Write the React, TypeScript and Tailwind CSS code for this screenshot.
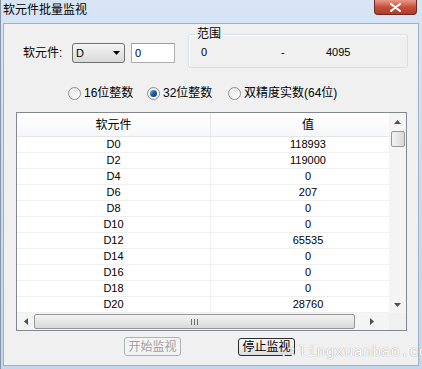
import React from "react";

const rows: [string, string][] = [
  ["D0", "118993"],
  ["D2", "119000"],
  ["D4", "0"],
  ["D6", "207"],
  ["D8", "0"],
  ["D10", "0"],
  ["D12", "65535"],
  ["D14", "0"],
  ["D16", "0"],
  ["D18", "0"],
  ["D20", "28760"],
];

const font = { fontFamily: '"Liberation Sans", "Noto Sans CJK SC", sans-serif' };

function Radio({ checked, label, width }: { checked?: boolean; label: string; width: string }) {
  return (
    <div className={`flex items-center ${width}`}>
      <span className="flex h-[13px] w-[13px] items-center justify-center rounded-full border border-[#8e8f8f] bg-gradient-to-br from-[#e6e6e6] to-[#ffffff]">
        {checked && (
          <span className="h-[7px] w-[7px] rounded-full bg-gradient-to-br from-[#79b8e6] via-[#1e5f99] to-[#0b3a66]" />
        )}
      </span>
      <span className="ml-[3px] text-[12px] leading-[14px] text-black">{label}</span>
    </div>
  );
}

function Arrow({ dir }: { dir: "up" | "down" | "left" | "right" }) {
  const pts = {
    up: "0,4 3.5,0 7,4",
    down: "0,0 7,0 3.5,4",
    left: "4,0 4,7 0,3.5",
    right: "0,0 0,7 4,3.5",
  }[dir];
  const vert = dir === "up" || dir === "down";
  return (
    <svg width={vert ? 7 : 4} height={vert ? 4 : 7} viewBox={vert ? "0 0 7 4" : "0 0 4 7"}>
      <polygon points={pts} fill="#505050" />
    </svg>
  );
}

export default function App() {
  return (
    <div
      className="relative h-[369px] w-[422px] overflow-hidden border-l border-[#8595a8] bg-gradient-to-b from-[#d7e5f5] via-[#c9dcf1] to-[#c2d6ec]"
      style={font}
    >
      {/* title bar */}
      <div className="flex h-[23px] items-start justify-between">
        <span className="ml-[2px] mt-[3px] text-[12px] leading-[14px] text-black">软元件批量监视</span>
        <div className="mr-[5px] flex h-[15px] w-[43px] items-center justify-center rounded-b-[4px] border border-t-0 border-[#6e2a22] bg-gradient-to-b from-[#e79a8a] via-[#c8503a] to-[#b33a24]">
          <svg width="11" height="9" viewBox="0 0 11 9">
            <path d="M1 1 L10 8 M10 1 L1 8" stroke="#ffffff" strokeWidth="2.2" strokeLinecap="round" />
          </svg>
        </div>
      </div>

      {/* client area */}
      <div className="ml-[2px] h-[343px] w-[416px] border border-[#9fb1c6] bg-[#f0f0f0]">
        {/* row 1 */}
        <div className="flex h-[45px] items-start">
          <div className="mt-[19px] flex h-[20px] items-center">
            <span className="ml-[19px] w-[49px] text-[12px] leading-[14px] text-black">软元件:</span>
            <div className="flex h-[20px] w-[53px] items-center justify-between rounded-[3px] border border-[#707070] bg-gradient-to-b from-[#f4f4f4] to-[#dadada] pl-[3px] pr-[4px]">
              <span className="text-[11px] leading-[12px] text-black">D</span>
              <svg width="7" height="4" viewBox="0 0 7 4">
                <polygon points="0,0 7,0 3.5,4" fill="#000000" />
              </svg>
            </div>
            <div className="ml-[6px] flex h-[20px] w-[44px] items-center border border-[#abadb3] border-t-[#9a9da5] bg-white pl-[3px]">
              <span className="text-[11px] leading-[12px] text-black">0</span>
            </div>
          </div>
          <fieldset className="ml-[13px] mt-[3px] w-[220px] rounded-[3px] border border-[#d5dfe5] px-0 pb-[5px] pt-[1px] shadow-[inset_1px_1px_0_#ffffff]">
            <legend className="ml-[6px] px-[2px] text-[12px] leading-[14px] text-black">范围</legend>
            <div className="flex h-[20px] items-center text-[11px] text-black">
              <span className="ml-[12px] w-[80px]">0</span>
              <span className="w-[45px]">-</span>
              <span>4095</span>
            </div>
          </fieldset>
        </div>

        {/* radios */}
        <div className="ml-[64px] mt-[15px] flex h-[18px] items-center">
          <Radio label="16位整数" width="w-[79px]" />
          <Radio checked label="32位整数" width="w-[81px]" />
          <Radio label="双精度实数(64位)" width="w-[120px]" />
        </div>

        {/* list view */}
        <div className="ml-[12px] mt-[10px] flex h-[219px] w-[391px] flex-col border border-[#828790] bg-white">
          <div className="flex h-[200px]">
            <div className="w-[372px] overflow-hidden">
              <div className="flex h-[24px] w-[388px] border-b border-[#e5e5e5] bg-gradient-to-b from-[#ffffff] to-[#f6f7f9]">
                <div className="flex w-[194px] items-center justify-center border-r border-[#e5e5e5] text-[12px] text-black">软元件</div>
                <div className="flex w-[194px] items-center justify-center text-[12px] text-black">值</div>
              </div>
              {rows.map(([name, value]) => (
                <div key={name} className="flex h-[16px] w-[388px] border-b border-[#f0f0f0] text-[11px] leading-[15px] text-black">
                  <div className="w-[194px] border-r border-[#f0f0f0] text-center">{name}</div>
                  <div className="w-[194px] text-center">{value}</div>
                </div>
              ))}
            </div>
            <div className="flex w-[17px] flex-col items-center bg-[#f4f4f4]">
              <div className="flex h-[18px] items-center justify-center">
                <Arrow dir="up" />
              </div>
              <div className="h-[16px] w-[14px] rounded-[2px] border border-[#979797] bg-gradient-to-r from-[#f3f3f3] to-[#d9d9d9]" />
              <div className="flex-1" />
              <div className="flex h-[17px] items-center justify-center">
                <Arrow dir="down" />
              </div>
            </div>
          </div>
          <div className="flex h-[17px]">
            <div className="flex w-[372px] items-center bg-[#f4f4f4]">
              <div className="flex w-[17px] justify-center">
                <Arrow dir="left" />
              </div>
              <div className="flex h-[15px] w-[321px] items-center justify-center rounded-[2px] border border-[#979797] bg-gradient-to-b from-[#f3f3f3] to-[#d9d9d9]">
                <div className="flex gap-[2px]">
                  <span className="h-[6px] w-px bg-[#707070]" />
                  <span className="h-[6px] w-px bg-[#707070]" />
                  <span className="h-[6px] w-px bg-[#707070]" />
                </div>
              </div>
              <div className="flex flex-1 justify-center">
                <Arrow dir="right" />
              </div>
            </div>
            <div className="w-[17px] bg-[#f0f0f0]" />
          </div>
        </div>

        {/* buttons */}
        <div className="ml-[120px] mt-[6px] flex h-[19px] items-center">
          <div className="flex h-[19px] w-[57px] items-center justify-center rounded-[3px] border border-[#adb2b5] bg-[#f4f4f4] text-[12px] text-[#a0a0a0]">
            开始监视
          </div>
          <div className="ml-[57px] flex h-[18px] w-[57px] items-center justify-center rounded-[3px] border border-[#2b2b2b] bg-gradient-to-b from-[#f6f6f6] to-[#dedede] text-[12px] text-black">
            停止监视
          </div>
        </div>
      </div>

      {/* watermark */}
      <div
        className="absolute left-[278px] top-[343px] whitespace-nowrap text-[15.5px] leading-[18px] text-white [text-shadow:0_0_1px_#7a7a7a]"
        style={{ fontFamily: '"Liberation Mono", monospace' }}
      >
        ::lingxuanbao.com
      </div>
    </div>
  );
}
